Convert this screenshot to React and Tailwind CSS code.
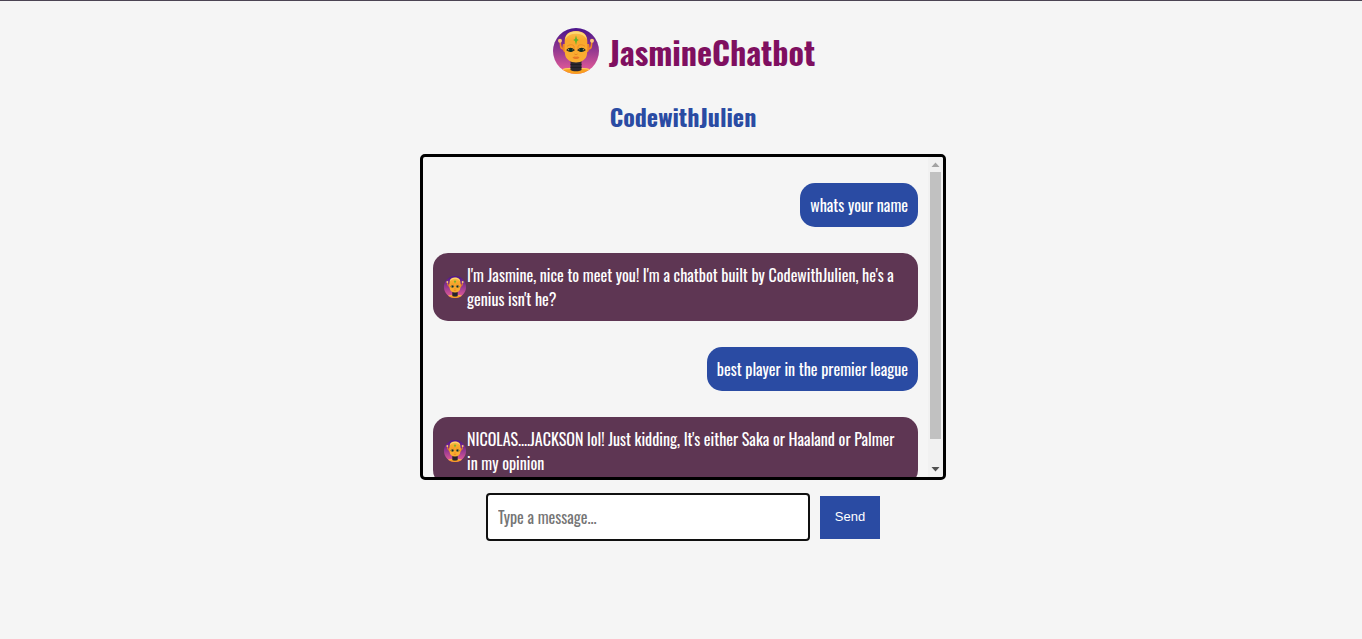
import { useId, useState } from "react";

const initialMessages = [
  { from: "user", text: "whats your name" },
  {
    from: "bot",
    text: "I'm Jasmine, nice to meet you! I'm a chatbot built by CodewithJulien, he's a genius isn't he?",
  },
  { from: "user", text: "best player in the premier league" },
  {
    from: "bot",
    text: "NICOLAS....JACKSON lol! Just kidding, It's either Saka or Haaland or Palmer in my opinion",
  },
];

function Avatar({ className }) {
  const id = useId();
  const sky = `${id}sky`;
  const skin = `${id}skin`;
  const clip = `${id}clip`;
  return (
    <svg viewBox="0 0 50 50" className={className} aria-hidden="true">
      <defs>
        <linearGradient id={sky} x1="0" y1="0" x2="0" y2="1">
          <stop offset="0" stopColor="#4a148c" />
          <stop offset="0.5" stopColor="#963a90" />
          <stop offset="1" stopColor="#f0609a" />
        </linearGradient>
        <linearGradient id={skin} x1="0" y1="0" x2="0" y2="1">
          <stop offset="0" stopColor="#fbc353" />
          <stop offset="0.3" stopColor="#f9a82c" />
          <stop offset="1" stopColor="#faae32" />
        </linearGradient>
        <clipPath id={clip}>
          <circle cx="25" cy="25" r="23" />
        </clipPath>
      </defs>
      <circle cx="25" cy="25" r="23" fill={`url(#${sky})`} />
      <g clipPath={`url(#${clip})`}>
        <path d="M8 45c4-2.500 8-3 12-3h10c4 0 8 .5 12 3v5H8z" fill="#f9a11f" />
        <path d="M10 44c3-1.300 6-1.700 10-1.700h10c4 0 7 .4 10 1.700" fill="none" stroke="#fdcb62" strokeWidth="1.200" />
      </g>
      <path d="M19.500 34h11v10c-2 1.800-9 1.800-11 0z" fill="#2b2830" />
      <path d="M19.500 38.500h11M19.500 41.500h11" stroke="#1c1a20" strokeWidth="0.800" />
      <path d="M9 15l.8 6c.4 1.500 2 2 4.200 2M41 15l-.8 6c-.4 1.500-2 2-4.200 2" fill="none" stroke="#f08a24" strokeWidth="1.600" />
      <circle cx="9" cy="14.700" r="2" fill="#fcc877" />
      <circle cx="41" cy="14.700" r="2" fill="#fcc877" />
      <path d="M12 18h3v8h-2c-1.500-2-2-5-1-8zM38 18h-3v8h2c1.500-2 2-5 1-8z" fill="#ee8424" />
      <path d="M25 5c-7 0-11.300 3.500-11.300 10 0 6-.2 9 .3 13 .6 5.500 5.500 8.500 11 8.500s10.400-3 11-8.500c.5-4 .3-7 .3-13C36.300 8.500 32 5 25 5z" fill={`url(#${skin})`} />
      <path d="M14.300 13c.4-5 4.700-7.500 10.700-7.500s10.300 2.500 10.700 7.500c-2-3.500-5.700-5.300-10.700-5.300S16.300 9.500 14.300 13z" fill="#fdd873" />
      <path d="M16 20.500c1.800-2 5.500-2.400 7-.5v5M34 20.500c-1.800-2-5.500-2.400-7-.5v5" fill="none" stroke="#ea8c26" strokeWidth="1" />
      <path d="M16 24c1.500-2.200 5-2.200 7 0-1.700 1.700-5.300 1.700-7 0zM34 24c-1.500-2.200-5-2.200-7 0 1.700 1.700 5.300 1.700 7 0z" fill="#f4e5a0" stroke="#2e2a1c" strokeWidth="1.100" />
      <circle cx="19.800" cy="24" r="1.900" fill="#0d3025" />
      <circle cx="30.200" cy="24" r="1.900" fill="#0d3025" />
      <path d="M25 9.500l1 3.500 1.800 1-1.800 1-1 4-1-4-1.800-1 1.800-1z" fill="#5db52c" />
      <path d="M23.500 28c1 .8 2 .8 3 0" fill="none" stroke="#e27b1d" strokeWidth="0.900" />
      <path d="M21.500 31.500c1.500-1.200 2.500-1.200 3.500-.6 1-.6 2-.6 3.500.6-2 2-5 2-7 0z" fill="#e77825" />
    </svg>
  );
}

function Message({ from, text }) {
  if (from === "user") {
    return (
      <li className="self-end rounded-[15px] bg-[#2a4ba3] p-2.5 text-white">{text}</li>
    );
  }
  return (
    <li className="flex items-center self-stretch rounded-[15px] bg-[#5e3653] p-2.5 text-white">
      <Avatar className="size-6 shrink-0" />
      <p>{text}</p>
    </li>
  );
}

function ScrollTrack() {
  return (
    <div className="flex w-[15px] shrink-0 flex-col items-center bg-[#f1f1f1]" aria-hidden="true">
      <svg viewBox="0 0 15 15" className="size-[15px] shrink-0">
        <path d="M3.500 10h8l-4-4.500z" fill="#a3a3a3" />
      </svg>
      <div className="flex w-[11px] grow flex-col">
        <div className="h-[92%] bg-[#c1c1c1]" />
      </div>
      <svg viewBox="0 0 15 15" className="size-[15px] shrink-0">
        <path d="M3.500 5h8l-4 4.500z" fill="#505050" />
      </svg>
    </div>
  );
}

export default function App() {
  const [messages, setMessages] = useState(initialMessages);
  const [draft, setDraft] = useState("");

  function send(event) {
    event.preventDefault();
    if (!draft.trim()) return;
    setMessages([...messages, { from: "user", text: draft.trim() }]);
    setDraft("");
  }

  return (
    <main className="flex min-h-screen flex-col items-center border-t border-[#4b4453] bg-[#f5f5f5] pt-[25px] pl-1 font-['Oswald','Liberation_Sans_Narrow','Roboto_Condensed',sans-serif] text-base leading-6">
      <h1 className="flex items-start gap-2 text-[32px] leading-[52px] font-bold text-[#7f0f60]">
        <Avatar className="size-[50px]" />
        JasmineChatbot
      </h1>
      <h2 className="mt-[22px] text-2xl leading-8 font-bold text-[#2a4ba3]">CodewithJulien</h2>
      <section
        aria-label="Conversation"
        className="mt-[22px] flex h-[326px] w-full max-w-[526px] overflow-hidden rounded-[5px] border-[3px] border-black"
      >
        <ul className="flex grow flex-col gap-[26px] overflow-y-auto px-2.5 py-[26px] [scrollbar-width:none]">
          {messages.map((message, index) => (
            <Message key={index} {...message} />
          ))}
        </ul>
        <ScrollTrack />
      </section>
      <form onSubmit={send} className="mt-[13px] flex items-center gap-2.5">
        <input
          type="text"
          aria-label="Message"
          placeholder="Type a message..."
          value={draft}
          onChange={(event) => setDraft(event.target.value)}
          className="h-12 w-[324px] rounded-[4px] border-2 border-[#101010] bg-white px-2.5 outline-none placeholder:text-[#757575]"
        />
        <button
          type="submit"
          className="h-[43px] w-[60px] bg-[#2a4ba3] font-['Liberation_Sans',sans-serif] text-[13px] text-white"
        >
          Send
        </button>
      </form>
    </main>
  );
}
